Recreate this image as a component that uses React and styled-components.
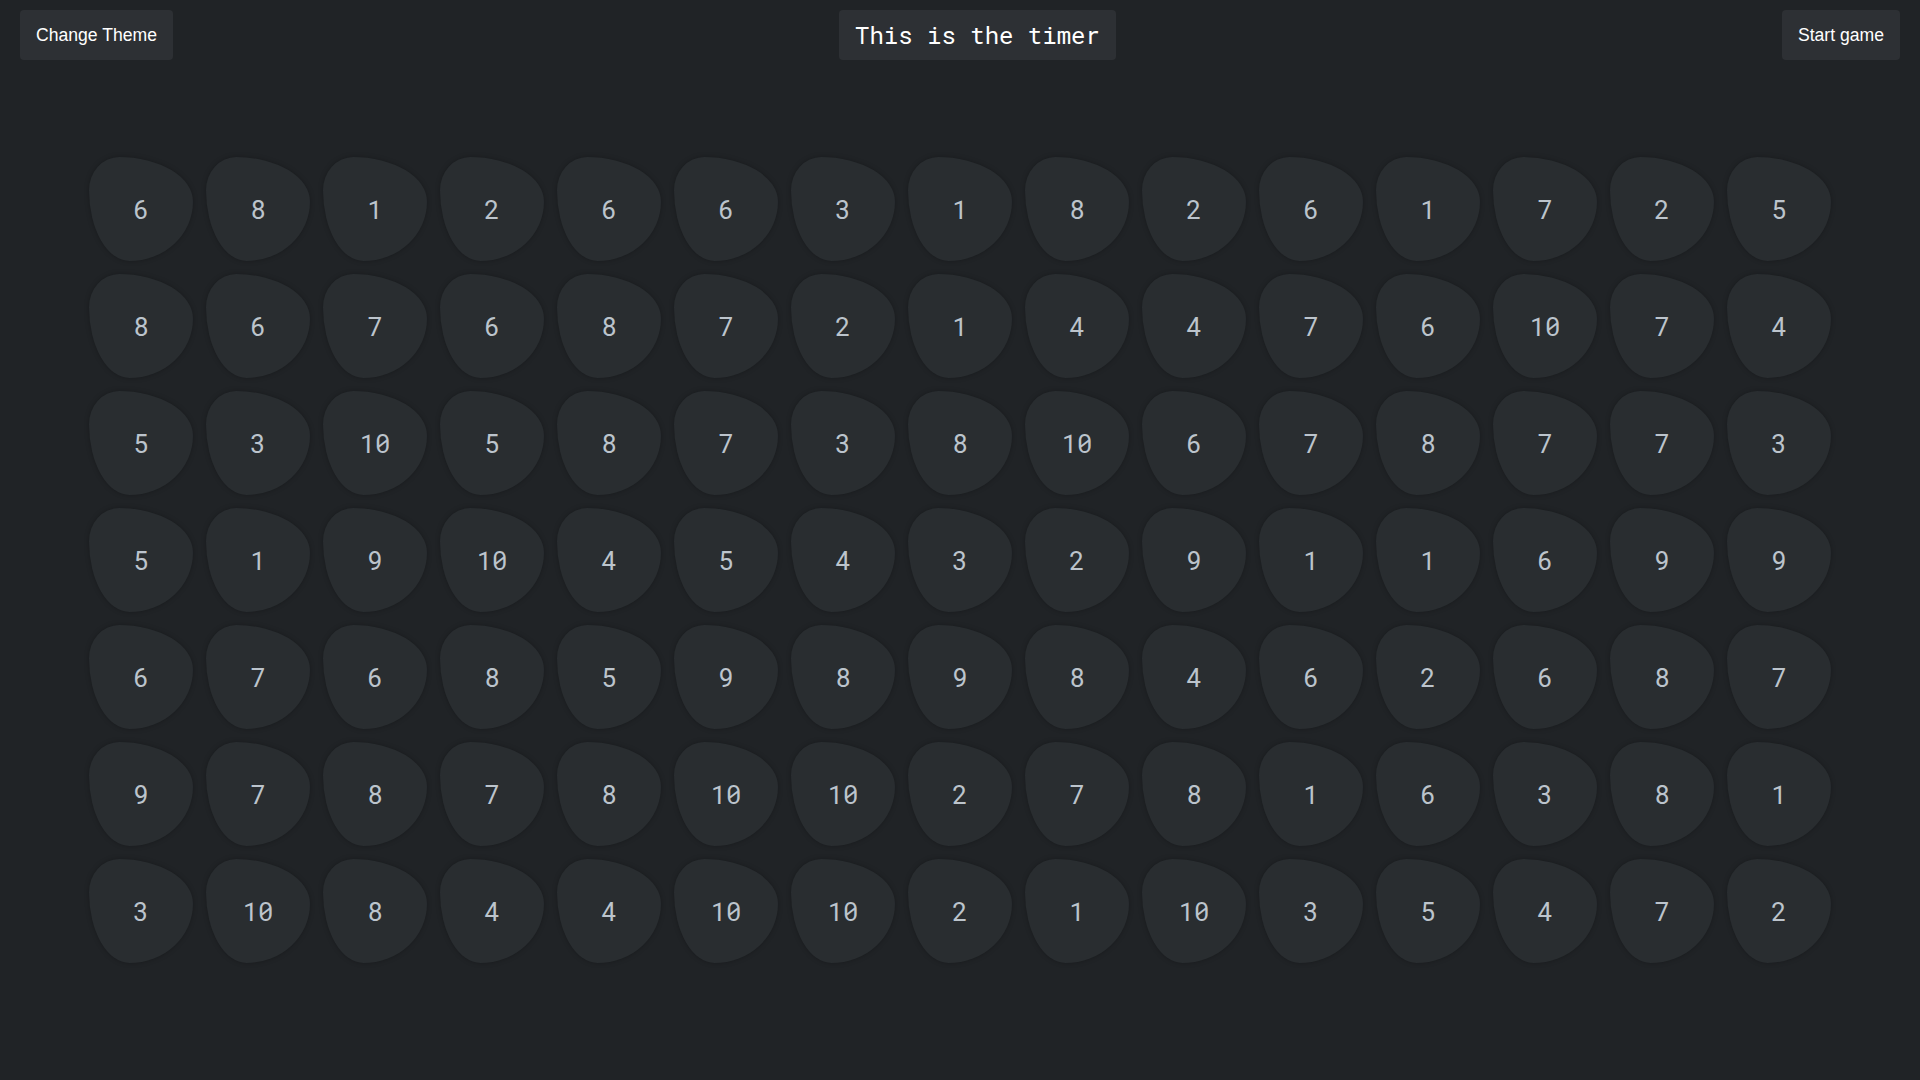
import React from 'react';
import styled, { createGlobalStyle } from 'styled-components';

const GlobalStyle = createGlobalStyle`
  html, body {
    margin: 0;
    padding: 0;
    background-color: #202326;
    font-family: "Liberation Sans", Arial, sans-serif;
  }
`;

const Page = styled.div`
  min-height: 1080px;
  background-color: #202326;
`;

const Header = styled.header`
  display: flex;
  justify-content: space-between;
  align-items: center;
  padding: 10px 20px;
`;

const Button = styled.button`
  height: 50px;
  padding: 0 16px;
  border: none;
  border-radius: 4px;
  background-color: #2d3034;
  color: #ffffff;
  font-family: "Liberation Sans", Arial, sans-serif;
  font-size: 17.6px;
  cursor: pointer;
`;

const Timer = styled.div`
  height: 50px;
  display: flex;
  align-items: center;
  padding: 0 16px;
  border-radius: 4px;
  background-color: #2d3034;
  color: #ffffff;
  font-family: "Roboto Mono", "DejaVu Sans Mono", "Liberation Mono", monospace;
  font-size: 24px;
`;

const Board = styled.div`
  display: grid;
  grid-template-columns: repeat(15, 104px);
  grid-auto-rows: 104px;
  gap: 13px;
  justify-content: center;
  margin-top: 87px;
`;

const Tile = styled.div`
  display: flex;
  align-items: center;
  justify-content: center;
  background-color: #292d30;
  border-radius: 29% 71% 61% 39% / 32% 43% 57% 68%;
  box-shadow: 0 0 5px rgba(0, 0, 0, 0.25);
  color: #bcc4cc;
  font-family: "Roboto Mono", "DejaVu Sans Mono", "Liberation Mono", monospace;
  font-size: 25.6px;
  user-select: none;
`;

const rows = [
  [6, 8, 1, 2, 6, 6, 3, 1, 8, 2, 6, 1, 7, 2, 5],
  [8, 6, 7, 6, 8, 7, 2, 1, 4, 4, 7, 6, 10, 7, 4],
  [5, 3, 10, 5, 8, 7, 3, 8, 10, 6, 7, 8, 7, 7, 3],
  [5, 1, 9, 10, 4, 5, 4, 3, 2, 9, 1, 1, 6, 9, 9],
  [6, 7, 6, 8, 5, 9, 8, 9, 8, 4, 6, 2, 6, 8, 7],
  [9, 7, 8, 7, 8, 10, 10, 2, 7, 8, 1, 6, 3, 8, 1],
  [3, 10, 8, 4, 4, 10, 10, 2, 1, 10, 3, 5, 4, 7, 2],
];

const App = () => {
  return (
    <Page>
      <GlobalStyle />
      <Header>
        <Button>Change Theme</Button>
        <Timer>This is the timer</Timer>
        <Button>Start game</Button>
      </Header>
      <Board>
        {rows.flat().map((n, i) => (
          <Tile key={i}>{n}</Tile>
        ))}
      </Board>
    </Page>
  );
};

export default App;
